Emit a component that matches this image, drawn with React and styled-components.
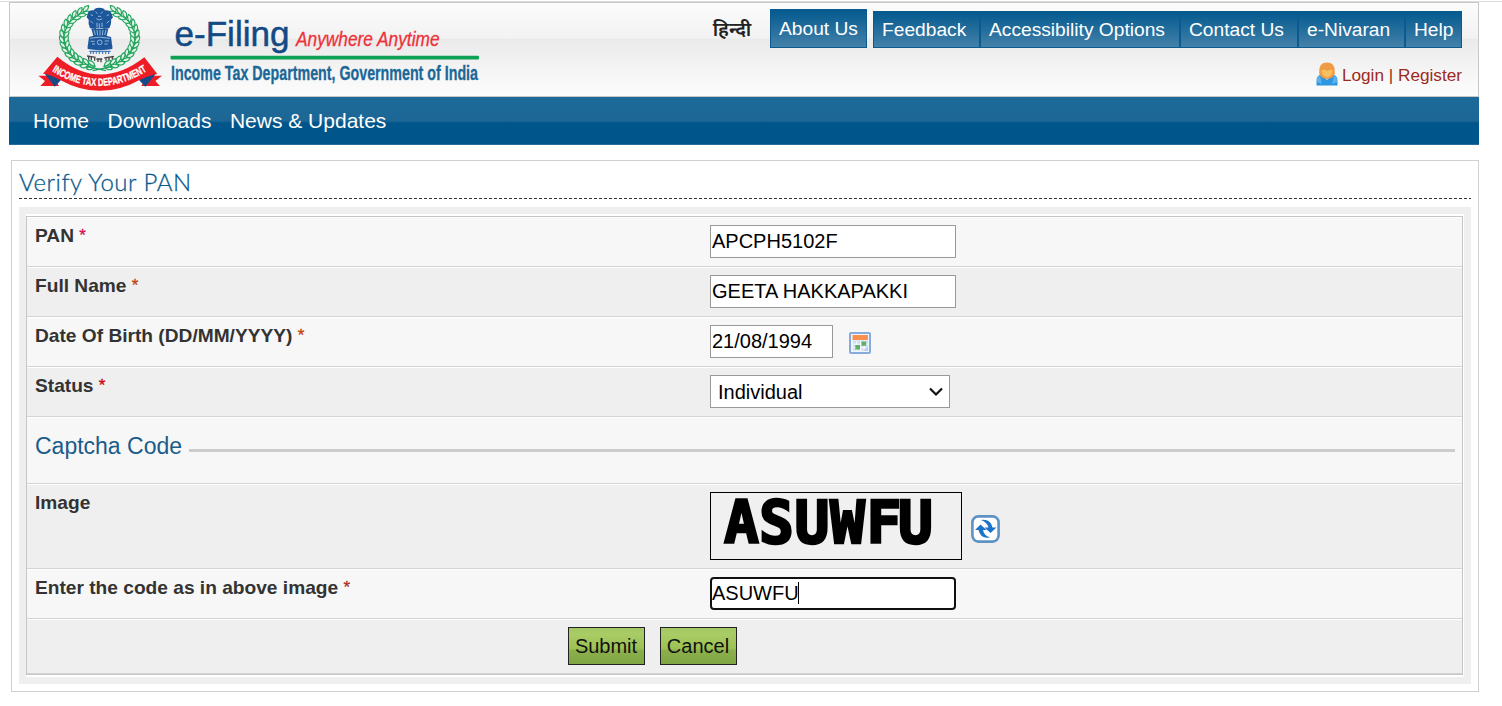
import React from 'react';
import styled, { createGlobalStyle } from 'styled-components';

const GlobalStyle = createGlobalStyle`
  * { box-sizing: border-box; }
  body { margin: 0; background: #fff; font-family: "Liberation Sans", Arial, sans-serif; }
  svg { display: block; flex: none; overflow: visible; }
`;

const Page = styled.div`
  padding-top: 1px;
  width: 1502px;
  height: 706px;
  overflow: hidden;
`;
const TopRule = styled.div`
  height: 1px;
  background: #dcdcdc;
`;
const Shell = styled.div`
  margin: 0 23px 0 9px;
`;
const Header = styled.header`
  height: 95px;
  display: flex;
  justify-content: space-between;
  border: 1px solid #c8c8c8;
  background: linear-gradient(#fcfcfc 0, #f2f2f2 38%, #eaeaea 39%, #fcfcfc 97%);
`;
const Brand = styled.div`
  display: flex;
  padding-left: 27px;
`;
const HeaderSide = styled.div`
  display: flex;
  flex-direction: column;
  align-items: flex-end;
  padding: 6px 16px 0 0;
`;
const TopLinks = styled.div`
  display: flex;
  align-items: flex-end;
  height: 39px;
`;
const Hindi = styled.span`
  width: 42px;
  margin-right: 17px;
  height: 39px;
  font: 600 19.5px/46px "Noto Sans Devanagari", "Noto Sans", sans-serif;
  text-align: center;
  white-space: nowrap;
  color: #222;
`;
const LinkGroup = styled.div`
  display: flex;
  margin-left: 6px;
`;
const TopLink = styled.a`
  width: ${(p) => p.$w}px;
  height: ${(p) => (p.$tall ? 39 : 37)}px;
  padding-left: 8px;
  border: 1px solid #0b5b90;
  border-left-width: ${(p) => (p.$joined ? 0 : 1)}px;
  border-right-width: ${(p) => (p.$divided ? 2 : 1)}px;
  background: linear-gradient(#045a8f, #4381a9);
  color: #fff;
  font-size: 19.2px;
  line-height: ${(p) => (p.$tall ? 38 : 36)}px;
  white-space: nowrap;
`;
const Account = styled.div`
  display: flex;
  align-items: center;
  gap: 4px;
  margin-top: 14px;
  height: 24px;
  font-size: 17.2px;
  line-height: 20px;
  color: #9c2a1c;
`;
const AccountLinks = styled.span`
  padding-top: 2px;
`;
const Nav = styled.nav`
  display: flex;
  gap: 18.5px;
  height: 48px;
  padding-left: 24px;
  border-bottom: 1px solid #2a6c99;
  background: linear-gradient(#1d6999 0, #1c6795 24px, #0a5b8e 25px, #00558a 26px);
  color: #fff;
  font-size: 21px;
  line-height: 47px;
`;
const Panel = styled.main`
  margin: 15px 0 0 2px;
  height: 532px;
  padding: 0 7px;
  border: 1px solid #d0d0d0;
`;
const Title = styled.h1`
  margin: 0;
  height: 38px;
  font: 300 24px/42px Lato, sans-serif;
  letter-spacing: 0.5px;
  color: #0b5a8e;
  -webkit-text-stroke: 0.3px #0b5a8e;
  background: repeating-linear-gradient(90deg, #333 0 3px, transparent 3px 5px) bottom / 100% 1px no-repeat;
`;
const FormFrame = styled.div`
  margin-top: 8px;
  padding: 7px;
  background: #efefef;
`;
const FormHalo = styled.div`
  padding: 2px 1px 2px 0;
  background: #fff;
`;
const FormTable = styled.form`
  border: 1px solid #c6c6c6;
`;
const Row = styled.div`
  display: flex;
  align-items: flex-start;
  justify-content: ${(p) => (p.$actions ? 'center' : 'flex-start')};
  gap: ${(p) => (p.$actions ? 15 : 0)}px;
  height: ${(p) => p.$h}px;
  padding: 7px 7px 0 8px;
  padding-right: ${(p) => (p.$actions ? 193 : 7)}px;
  border-top: 1px solid #fff;
  border-bottom: 1px solid #d4d4d4;
  background: ${(p) => (p.$dark ? '#efefef' : '#f7f7f7')};
`;
const Label = styled.label`
  width: 675px;
  font-size: 19.15px;
  line-height: 22px;
  font-weight: 700;
  color: #333;
`;
const Star = styled.span`
  position: relative;
  top: -1px;
  font-size: 17px;
  line-height: 1;
  font-weight: 400;
  color: ${(p) => p.$c || '#c00'};
  -webkit-text-stroke: 0.3px currentColor;
`;
const Field = styled.div`
  display: flex;
  align-items: center;
  justify-content: space-between;
  width: ${(p) => p.$w || 246}px;
  height: 33px;
  padding: ${(p) => (p.$select ? 1 : 0)}px 5px ${(p) => (p.$select ? 0 : 1)}px ${(p) => (p.$select ? 7 : 1)}px;
  border: 1px solid #999;
  background: #fff;
  color: #000;
  font-size: 20px;
`;
const FocusedField = styled(Field)`
  justify-content: flex-start;
  padding-left: 0;
  border: 2px solid #101010;
  border-radius: 4px;
`;
const Caret = styled.span`
  width: 1px;
  height: 22px;
  margin-left: -1px;
  background: #000;
`;
const CalendarSlot = styled.span`
  margin: 7px 0 0 16px;
`;
const SectionTitle = styled.h2`
  display: flex;
  align-items: center;
  gap: 7px;
  width: 100%;
  margin: 7px 0 0;
  font-size: 23px;
  line-height: 28px;
  font-weight: 400;
  color: #1a5c8a;
`;
const SectionLine = styled.span`
  flex: 1;
  height: 3px;
  margin-top: 9px;
  background: #ccc;
`;
const CaptchaBox = styled.div`
  width: 252px;
  height: 68px;
  border: 1px solid #000;
  background: #f0f0f0;
`;
const RefreshSlot = styled.span`
  margin: 23px 0 0 9px;
`;
const Button = styled.button`
  width: 77px;
  height: 38px;
  padding: 0;
  border: 1px solid #222;
  background: linear-gradient(#a3c765 0, #a9cc66 6px, #9cc153 21px, #8bb04c 22px, #80a544 100%);
  color: #111;
  font: 20px "Liberation Sans", Arial, sans-serif;
`;

const leafPoints = Array.from({ length: 15 }, (_, i) => {
  const angle = 101 + i * 10.4;
  const t = (angle * Math.PI) / 180;
  return { x: 298 + 106 * Math.cos(t), y: 113 + 86 * Math.sin(t), a: angle + 90 };
});

const Branch = () => (
  <g>
    <path d="M280 205C165 175 165 55 252 27" fill="none" stroke="#1fa35a" strokeWidth="2.5" />
    {leafPoints.map((p, i) => (
      <g key={i} transform={`translate(${p.x} ${p.y}) rotate(${p.a})`} fill="#e4f4ea" stroke="#23a45c" strokeWidth="3.4">
        <path d="M-7 0C-3 -13 8 -16 16 -12C14 -5 6 0 -7 0Z" />
        <path d="M-7 0C-3 13 8 16 16 12C14 5 6 0 -7 0Z" />
      </g>
    ))}
  </g>
);

const Emblem = () => (
  <svg width="126" height="93" viewBox="111 9 378 279">
    <Branch />
    <g transform="translate(597 0) scale(-1 1)"><Branch /></g>
    <path d="M258 199L318 212M338 199L278 212" stroke="#1fa35a" strokeWidth="3.5" />
    <g fill="#1d579b">
      <path d="M283 27q15-7 30 0l5 14q-4 18-3 44h-31q1-26-4-44Z" />
      <path d="M281 31q-15-2-18 11l-3 10 6 7q-2 10 4 26l18 2V40Z" />
      <path d="M315 31q16-2 20 11l4 10-6 7q2 10-5 26l-18 2V40Z" />
      <path d="M274 86h51l-5 22h-40Z" />
      <path d="M267 111q33-12 66 0l4 29q-37 12-74 0Z" />
      <path d="M263 139q36 12 74 0v8q-37 7-74 0Z" />
    </g>
    <g stroke="#c3d6ea" strokeWidth="2.2" fill="none">
      <path d="M287 35l5 6M308 35l-5 6M294 49h9M289 56q9 8 18 0M272 44l7 3M327 44l-7 3M271 62l8 8M328 62l-8 8M291 68v14M298 70v14M306 68v14M282 90l4 15M291 90l2 16M300 90v16M309 90l-2 16M318 90l-4 15" />
      <circle cx="299" cy="127" r="7" />
      <path d="M272 124h12M276 132h9M314 123h13M313 132h10M270 115q28-7 60 0" />
    </g>
    <path d="M268 154h64M272 152v10M280 156v6M289 152v9M298 156v6M308 152v10M317 155v7M326 152v10" stroke="#4279b5" strokeWidth="3.5" fill="none" />
    <path d="M261 168l26 4M266 171v8M274 171v9M284 174v8M289 177h18M294 178v8M303 178v9M313 174l29-5M318 174v8M327 172v8M337 170v8" stroke="#444" strokeWidth="4" fill="none" />
    <path d="M115 227h44l18 31h-56l14-15Z" fill="#ee1c25" />
    <path d="M486 227h-44l-18 31h56l-14-15Z" fill="#ee1c25" />
    <path d="M132 218l56 17-24 25Z" fill="#174a87" />
    <path d="M470 218l-58 17 24 25Z" fill="#174a87" />
    <path d="M172 170Q300 276 433 172L472 222Q455 224 420 239Q300 306 179 239Q148 222 129 221Z" fill="#ee1c25" />
    <path id="ribbonLine" d="M156 213Q297 304 446 210" fill="none" />
    <text fontSize="32" fontWeight="700" fontFamily="Liberation Sans Narrow, Liberation Sans" fill="#fff" stroke="#fff" strokeWidth="1">
      <textPath href="#ribbonLine" textLength="303" lengthAdjust="spacingAndGlyphs">INCOME TAX DEPARTMENT</textPath>
    </text>
  </svg>
);

const Wordmark = () => (
  <svg width="320" height="93" viewBox="163 3 320 93">
    <text x="174.500" y="45.500" fontSize="35" textLength="115" lengthAdjust="spacingAndGlyphs" fill="#124a85" stroke="#124a85" strokeWidth="0.5">e-Filing</text>
    <text x="296" y="45.500" fontSize="20" fontStyle="italic" textLength="143.500" lengthAdjust="spacingAndGlyphs" fill="#ef3038" stroke="#ef3038" strokeWidth="0.3">Anywhere Anytime</text>
    <rect x="170.500" y="55.700" width="308.500" height="3.800" rx="1" fill="#0fa255" />
    <text x="171" y="79.500" fontSize="20.500" fontWeight="700" textLength="307" lengthAdjust="spacingAndGlyphs" fill="#1b6797" stroke="#1b6797" strokeWidth="0.3">Income Tax Department, Government of India</text>
  </svg>
);

const UserIcon = () => (
  <svg width="22" height="24" viewBox="0 0 22 24">
    <path d="M.5 23.500v-5q0-4 3-5.500h15q3 1.500 3 5.500v5Z" fill="#2c96e0" />
    <path d="M1 20v-2q0-3 3-4.500l2 8.500ZM21 20v-2q0-3-3-4.500l-2 8.500Z" fill="#5bb2ec" />
    <path d="M7 14l4 4 4-4Z" fill="#e8f4fc" />
    <path d="M3.300 9.500Q3 .5 11 .5T18.700 9.500Q19.500 11 18 13 16.500 16.500 11 17 5.500 16.500 4 13 2.500 11 3.300 9.500Z" fill="#ef9a45" />
    <path d="M5.500 8q3-1 5.500 1 3-2 5.500-1 0 6-5.500 7.500Q5.500 14 5.500 8Z" fill="#fbc05e" />
  </svg>
);

const CalendarIcon = () => (
  <svg width="22" height="22" viewBox="0 0 22 22">
    <rect x="1" y="1" width="20" height="20" rx="1" fill="#eef5fd" stroke="#86abdc" strokeWidth="2" />
    <rect x="3.500" y="3" width="15.500" height="5" fill="#fb8f50" />
    <path d="M4 8.500h15v10H4Z" fill="#cfdff3" />
    <path d="M4 12.200h15M4 15.600h15M7.700 9v10M11.500 9v10M15.200 9v10" stroke="#f6faff" />
    <path d="M12.500 9.500h4.700v4.200h-4.700ZM6.300 13h4.700v4.500H6.300Z" fill="#62b162" />
    <path d="M14 19l5-5v5Z" fill="#b8d2f1" />
  </svg>
);

const RefreshIcon = () => (
  <svg width="29" height="28" viewBox="0 0 29 28">
    <rect x="1.400" y="1.400" width="26.200" height="25.200" rx="6" fill="#fff" stroke="#5e91c4" strokeWidth="2.600" />
    <path d="M10 5Q19.500 3.500 21.500 12.500h4l-6 5.500-6-5.500h4Q16 7 10 5Z" fill="#1c73c9" />
    <path d="M19 22.500Q9.500 24 7.500 15H4l5.500-5.500 6 5.500H12Q13 20.500 19 22.500Z" fill="#1c73c9" />
  </svg>
);

const Captcha = () => (
  <svg width="250" height="66" viewBox="0 0 250 66">
    <text x="13 48 83.5 119 155.5 187" y="50" fontFamily="DejaVu Sans Mono" fontWeight="700" fontSize="58" stroke="#000" strokeWidth="2.400">ASUWFU</text>
  </svg>
);

const Chevron = () => (
  <svg width="16" height="10" viewBox="0 0 16 10">
    <path d="M2 1.500l6 6 6-6" fill="none" stroke="#111" strokeWidth="2.200" />
  </svg>
);

export default function App() {
  return (
    <Page>
      <GlobalStyle />
      <TopRule />
      <Shell>
        <Header>
          <Brand>
            <Emblem />
            <Wordmark />
          </Brand>
          <HeaderSide>
            <TopLinks>
              <Hindi lang="hi">हिन्दी</Hindi>
              <TopLink $w={97} $tall>About Us</TopLink>
              <LinkGroup>
                <TopLink $w={108} $divided>Feedback</TopLink>
                <TopLink $w={200} $joined $divided>Accessibility Options</TopLink>
                <TopLink $w={118} $joined $divided>Contact Us</TopLink>
                <TopLink $w={107} $joined $divided>e-Nivaran</TopLink>
                <TopLink $w={56} $joined>Help</TopLink>
              </LinkGroup>
            </TopLinks>
            <Account>
              <UserIcon />
              <AccountLinks>Login | Register</AccountLinks>
            </Account>
          </HeaderSide>
        </Header>
        <Nav>
          <span>Home</span>
          <span>Downloads</span>
          <span>News &amp; Updates</span>
        </Nav>
        <Panel>
          <Title>Verify Your PAN</Title>
          <FormFrame>
            <FormHalo>
              <FormTable>
                <Row $h={50}>
                  <Label>PAN <Star $c="#d1104a">*</Star></Label>
                  <Field>APCPH5102F</Field>
                </Row>
                <Row $h={50} $dark>
                  <Label>Full Name <Star $c="#c2410c">*</Star></Label>
                  <Field>GEETA HAKKAPAKKI</Field>
                </Row>
                <Row $h={50}>
                  <Label>Date Of Birth (DD/MM/YYYY) <Star $c="#c2410c">*</Star></Label>
                  <Field $w={123}>21/08/1994</Field>
                  <CalendarSlot><CalendarIcon /></CalendarSlot>
                </Row>
                <Row $h={50} $dark>
                  <Label>Status <Star>*</Star></Label>
                  <Field $w={240} $select>Individual<Chevron /></Field>
                </Row>
                <Row $h={67}>
                  <SectionTitle>Captcha Code<SectionLine /></SectionTitle>
                </Row>
                <Row $h={85} $dark>
                  <Label>Image</Label>
                  <CaptchaBox><Captcha /></CaptchaBox>
                  <RefreshSlot><RefreshIcon /></RefreshSlot>
                </Row>
                <Row $h={50}>
                  <Label>Enter the code as in above image <Star $c="#a8321c">*</Star></Label>
                  <FocusedField>ASUWFU<Caret /></FocusedField>
                </Row>
                <Row $h={55} $dark $actions>
                  <Button type="button">Submit</Button>
                  <Button type="button">Cancel</Button>
                </Row>
              </FormTable>
            </FormHalo>
          </FormFrame>
        </Panel>
      </Shell>
    </Page>
  );
}
